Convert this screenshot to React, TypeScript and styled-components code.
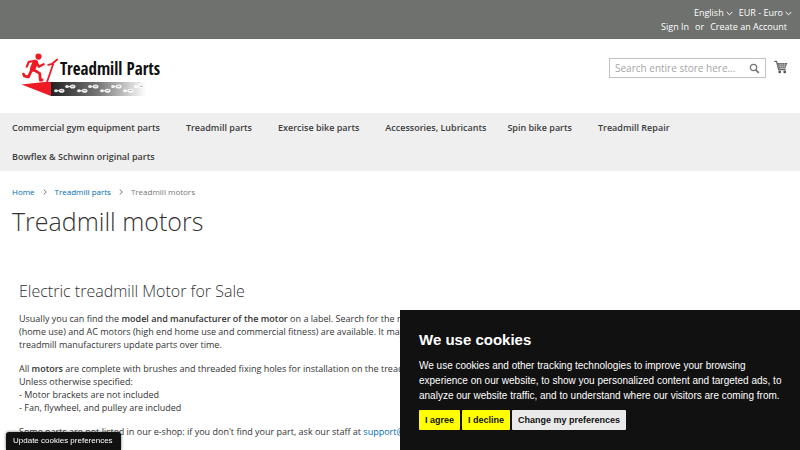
import React from "react";
import styled, { createGlobalStyle, css } from "styled-components";

const GlobalStyle = createGlobalStyle`
  * { box-sizing: border-box; }
  html, body { margin: 0; background: #fff; }
  body {
    color: #333;
    font-family: "Open Sans", "Noto Sans", sans-serif;
    font-size: 9px;
    line-height: 13px;
    overflow: hidden;
  }
  h1, h2, p, ul, ol { margin: 0; padding: 0; font-weight: 400; }
  ul, ol { list-style: none; }
  a { text-decoration: none; color: #006bb4; }
  button { font-family: inherit; cursor: pointer; }
`;

const TopPanel = styled.div`
  display: flex;
  flex-direction: column;
  align-items: flex-end;
  height: 39px;
  padding: 6px 8px 0 12px;
  background: #6e716e;
  border-bottom: 1px solid #666966;
  color: #fff;
`;

const Switchers = styled.div`
  display: flex;
  gap: 6px;
`;

const Switcher = styled.button`
  display: flex;
  align-items: center;
  gap: 2px;
  padding: 0;
  border: 0;
  background: none;
  color: inherit;
  font-size: 9px;
  line-height: 14px;
`;

const AccountLinks = styled.div`
  display: flex;
  gap: 6px;
  padding-right: 5px;
  line-height: 13px;
`;

const AccountLink = styled.a`
  color: #fff;
`;

const Header = styled.header`
  display: flex;
  align-items: flex-start;
  justify-content: space-between;
  height: 74px;
  padding: 12px 12px 0 21px;
`;

const HeaderTools = styled.div`
  display: flex;
  align-items: center;
  gap: 8px;
  padding-top: 7px;
`;

const SearchForm = styled.form`
  display: flex;
  align-items: center;
  width: 157px;
  height: 20px;
  padding: 0 5px;
  border: 1px solid #c2c2c2;
  background: #fff;
`;

const SearchInput = styled.input`
  flex: 1;
  min-width: 0;
  padding: 0;
  border: 0;
  outline: 0;
  background: none;
  font-family: inherit;
  font-size: 10px;
  &::placeholder { color: #a5a5a5; opacity: 1; }
`;

const IconButton = styled.button`
  display: flex;
  padding: 0;
  border: 0;
  background: none;
`;

const Nav = styled.nav`
  padding: 0 12px;
  background: #efefef;
`;

const NavList = styled.ul`
  display: flex;
  flex-wrap: wrap;
  column-gap: 26px;
`;

const NavItem = styled.li<{ $tight?: boolean }>`
  margin-right: ${(p) => (p.$tight ? "-5px" : "0")};
`;

const NavLink = styled.a`
  display: block;
  color: #3d3d3d;
  font-size: 9px;
  font-weight: 600;
  line-height: 29px;
`;

const Main = styled.main`
  padding: 0 12px;
`;

const Breadcrumbs = styled.ol`
  display: flex;
  align-items: center;
  padding-top: 15px;
  font-size: 8px;
  line-height: 12px;
  color: #757575;
`;

const Crumb = styled.li`
  display: flex;
  align-items: center;
`;

const CrumbArrow = styled.svg`
  margin: 0 7px;
`;

const PageTitle = styled.h1`
  margin-top: 5px;
  font-size: 25px;
  font-weight: 300;
  line-height: 36px;
`;

const Description = styled.section`
  padding: 40px 6px 0 7px;
  strong { font-weight: 600; }
`;

const SectionTitle = styled.h2`
  margin-bottom: 9px;
  font-size: 16px;
  font-weight: 300;
  line-height: 24px;
`;

const Paragraph = styled.p`
  margin-bottom: 11px;
`;

const CookieDialog = styled.section`
  position: fixed;
  right: 0;
  bottom: 0;
  width: 50%;
  min-height: 140px;
  padding: 19px 15px 19px 19px;
  background: #111;
  color: #fff;
  font-family: "Liberation Sans", Arial, sans-serif;
`;

const CookieTitle = styled.h2`
  margin-bottom: 8px;
  font-size: 15px;
  font-weight: 700;
  line-height: 21px;
`;

const CookieText = styled.p`
  margin-bottom: 7px;
  font-size: 10px;
  line-height: 15px;
`;

const CookieActions = styled.div`
  display: flex;
  gap: 2px;
`;

const CookieButton = styled.button<{ $primary?: boolean }>`
  height: 20px;
  padding: 0 6px;
  border: 0;
  border-radius: 1px;
  color: #111;
  font-size: 9px;
  font-weight: 700;
  ${(p) => (p.$primary ? css`background: #ff0;` : css`background: #eaeaea;`)}
`;

const PreferencesTab = styled.button`
  position: fixed;
  left: 6px;
  bottom: 0;
  height: 18px;
  padding: 0 8px 0 7px;
  border: 0;
  border-radius: 3px 3px 0 0;
  background: #111;
  color: #fff;
  box-shadow: 0 0 3px rgba(0, 0, 0, 0.6);
  font-family: "Liberation Sans", Arial, sans-serif;
  font-size: 8px;
  line-height: 12px;
`;

const Chevron = () => (
  <svg width="7" height="5" viewBox="0 0 7 5" aria-hidden="true">
    <path d="M.7 1 3.5 3.8 6.3 1" fill="none" stroke="#fff" strokeWidth="1" />
  </svg>
);

const SearchIcon = () => (
  <svg width="11" height="11" viewBox="0 0 11 11" aria-hidden="true">
    <circle cx="4.5" cy="4.5" r="3.2" fill="none" stroke="#757575" strokeWidth="1.2" />
    <path d="m6.8 6.8 3 3" stroke="#757575" strokeWidth="1.7" />
  </svg>
);

const CartIcon = () => (
  <svg width="14" height="14" viewBox="0 0 14 14" aria-hidden="true">
    <path d="M.3 1.3h2.2l2.2 8.4h7" fill="none" stroke="#666" strokeWidth="1.3" />
    <path d="M3 3h10.3l-1.8 5.4H4.4z" fill="#666" />
    <path d="M3.6 4.9h9.2M4 6.7h8.3M6 3l.6 5.4M8.2 3v5.4M10.6 3l-.6 5.4" stroke="#fff" strokeWidth=".35" />
    <circle cx="5.7" cy="11.9" r="1.4" fill="#555" />
    <circle cx="10.7" cy="11.9" r="1.4" fill="#555" />
  </svg>
);

const steps = [56, 79, 102, 125];

const Footprint = ({ x, y }: { x: number; y: number }) => (
  <g>
    <ellipse cx={x} cy={y} rx="1.9" ry="1.5" />
    <ellipse cx={x + 5.6} cy={y} rx="2.9" ry="2" />
    <path d={`M${x + 1} ${y}h3`} stroke="#fff" strokeWidth="1" />
    <path d={`M${x + 4} ${y - 0.3}h3`} stroke="#777" strokeWidth=".6" />
  </g>
);

const Logo = () => (
  <svg width="142" height="46" viewBox="21 51 142 46" role="img" aria-label="Treadmill Parts">
    <defs>
      <linearGradient id="belt">
        <stop offset="0" stopColor="#222" />
        <stop offset=".5" stopColor="#777" />
        <stop offset="1" stopColor="#fff" />
      </linearGradient>
    </defs>
    <path d="M51 82h95v14H51z" fill="url(#belt)" />
    <g fill="#fff" opacity=".9">
      {steps.map((x) => (
        <g key={x}>
          <Footprint x={x} y={90.7} />
          <Footprint x={x + 11} y={86.6} />
        </g>
      ))}
    </g>
    <g fill="#ed1c24">
      <path d="M21.5 84.5 44 82h7v14z" />
      <circle cx="38.5" cy="56.6" r="3.1" />
    </g>
    <g fill="none" stroke="#ed1c24" strokeLinecap="round" strokeLinejoin="round">
      <path d="m35.3 62.5-2.6 6.3" strokeWidth="5.6" />
      <path d="m34 61-5.2.8-2 4.9" strokeWidth="2.2" />
      <path d="m36.5 62 2.3 4.7 4.8-2.4" strokeWidth="2.3" />
      <path d="m33.5 69.8 6.2 3.6.6 6.6h1.8" strokeWidth="2.8" />
      <path d="m31.8 69.5-3.3 7.3-4-.7-1-2" strokeWidth="2.8" />
      <path d="m47.2 81.5 6-17.5m-5 .8 4-1 5-4.3" strokeWidth="1.8" />
    </g>
    <text x="60" y="75" fontFamily="'Liberation Sans Narrow', 'Open Sans Condensed', 'Open Sans', sans-serif" fontSize="17" fontWeight="700" fill="#111">
      Treadmill Parts
    </text>
  </svg>
);

const Arrow = () => (
  <CrumbArrow width="6" height="6" viewBox="0 0 6 6" aria-hidden="true">
    <path d="m1.7.5 2.6 2.5-2.6 2.5" fill="none" stroke="#757575" strokeWidth="1" />
  </CrumbArrow>
);

const categories = [
  { name: "Commercial gym equipment parts" },
  { name: "Treadmill parts" },
  { name: "Exercise bike parts" },
  { name: "Accessories, Lubricants", tight: true },
  { name: "Spin bike parts" },
  { name: "Treadmill Repair" },
  { name: "Bowflex & Schwinn original parts" },
];

export default function App() {
  return (
    <>
      <GlobalStyle />
      <TopPanel>
        <Switchers>
          <Switcher type="button">English <Chevron /></Switcher>
          <Switcher type="button">EUR - Euro <Chevron /></Switcher>
        </Switchers>
        <AccountLinks>
          <AccountLink href="#signin">Sign In</AccountLink>
          <span>or</span>
          <AccountLink href="#register">Create an Account</AccountLink>
        </AccountLinks>
      </TopPanel>
      <Header>
        <a href="#home"><Logo /></a>
        <HeaderTools>
          <SearchForm role="search">
            <SearchInput type="text" aria-label="Search" placeholder="Search entire store here..." />
            <IconButton type="button" aria-label="Search"><SearchIcon /></IconButton>
          </SearchForm>
          <a href="#cart" aria-label="My Cart"><CartIcon /></a>
        </HeaderTools>
      </Header>
      <Nav>
        <NavList>
          {categories.map((c) => (
            <NavItem key={c.name} $tight={c.tight}>
              <NavLink href="#category">{c.name}</NavLink>
            </NavItem>
          ))}
        </NavList>
      </Nav>
      <Main>
        <Breadcrumbs>
          <Crumb><a href="#home">Home</a><Arrow /></Crumb>
          <Crumb><a href="#parts">Treadmill parts</a><Arrow /></Crumb>
          <Crumb>Treadmill motors</Crumb>
        </Breadcrumbs>
        <PageTitle>Treadmill motors</PageTitle>
        <Description>
          <SectionTitle>Electric treadmill Motor for Sale</SectionTitle>
          <Paragraph>
            Usually you can find the <strong>model and manufacturer of the motor</strong> on a label. Search for the model
            <br />
            (home use) and AC motors (high end home use and commercial fitness) are available. It may
            <br />
            treadmill manufacturers update parts over time.
          </Paragraph>
          <Paragraph>
            All <strong>motors</strong> are complete with brushes and threaded fixing holes for installation on the treadmill.
            <br />
            Unless otherwise specified:
            <br />
            - Motor brackets are not included
            <br />
            - Fan, flywheel, and pulley are included
          </Paragraph>
          <Paragraph>
            Some parts are not listed in our e-shop: if you don't find your part, ask our staff at <a href="#support">support@</a>
          </Paragraph>
        </Description>
      </Main>
      <CookieDialog role="dialog" aria-labelledby="cookie-title">
        <CookieTitle id="cookie-title">We use cookies</CookieTitle>
        <CookieText>
          We use cookies and other tracking technologies to improve your browsing experience on our website, to show you
          personalized content and targeted ads, to analyze our website traffic, and to understand where our visitors are
          coming from.
        </CookieText>
        <CookieActions>
          <CookieButton type="button" $primary>I agree</CookieButton>
          <CookieButton type="button" $primary>I decline</CookieButton>
          <CookieButton type="button">Change my preferences</CookieButton>
        </CookieActions>
      </CookieDialog>
      <PreferencesTab type="button">Update cookies preferences</PreferencesTab>
    </>
  );
}
